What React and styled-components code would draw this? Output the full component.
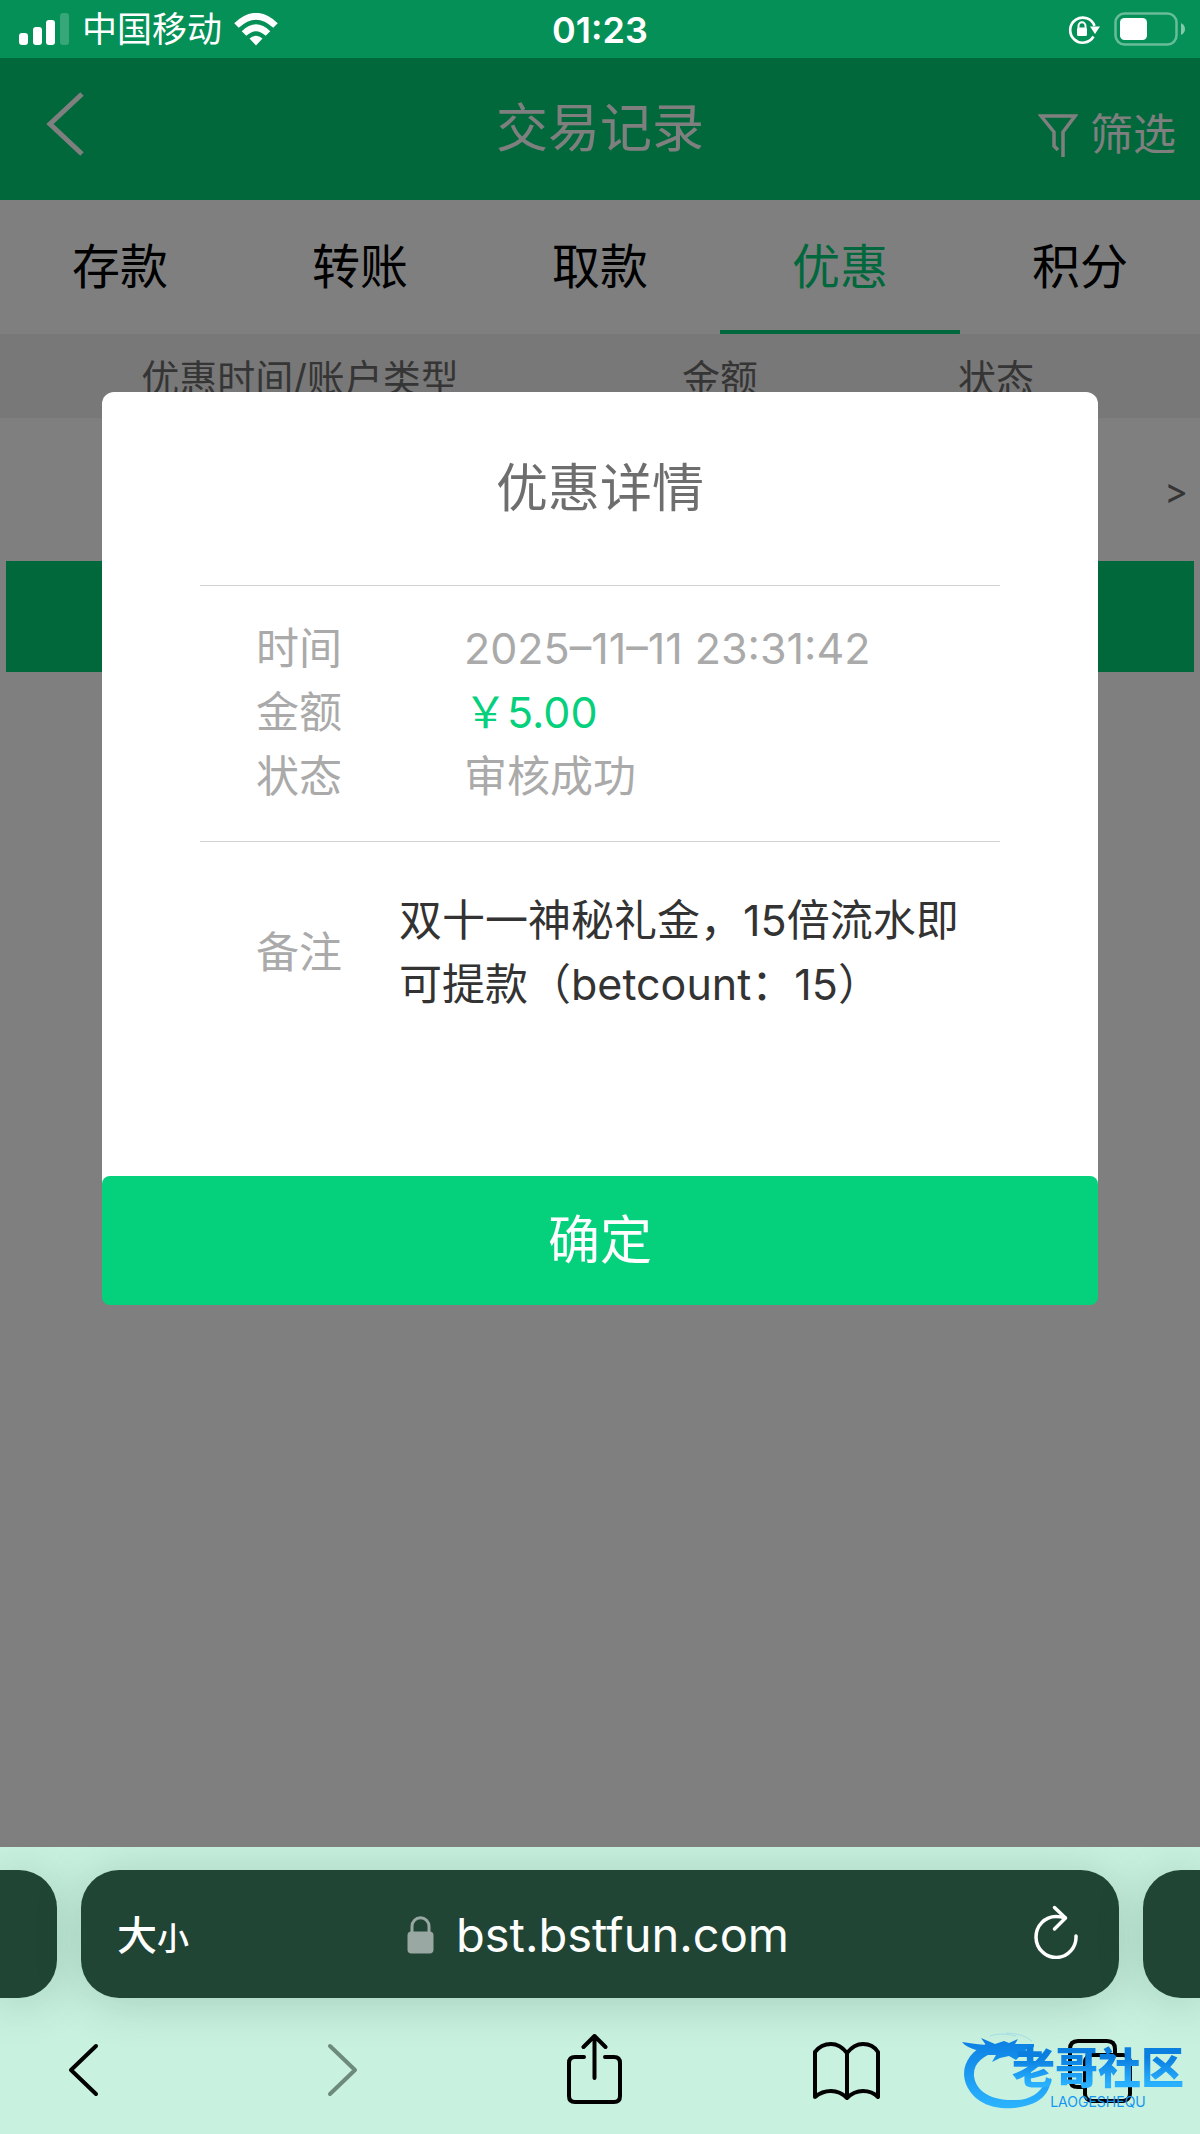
import React, { useState } from 'react';
import styled, { createGlobalStyle } from 'styled-components';

const GlobalStyle = createGlobalStyle`
    * {
        box-sizing: border-box;
    }
    body {
        margin: 0;
        font-family: Inter, 'Noto Sans CJK SC', sans-serif;
        color: #000;
    }
    button {
        border: 0;
        padding: 0;
        background: none;
        color: inherit;
        font: inherit;
        cursor: pointer;
    }
    svg {
        display: block;
        flex: none;
    }
`;

const Screen = styled.div`
    display: flex;
    flex-direction: column;
    min-height: 100vh;
`;

/* ---------- status bar ---------- */

const StatusBar = styled.div`
    display: grid;
    grid-template-columns: 1fr auto 1fr;
    align-items: center;
    height: 58px;
    padding: 0 14px;
    background: #059057;
    color: #fff;
`;

const StatusSide = styled.div`
    display: flex;
    align-items: center;
    justify-content: ${props => (props.$end ? 'flex-end' : 'flex-start')};
    gap: ${props => (props.$end ? '14px' : '12px')};
    padding-left: 5px;
    font-size: 35px;
    line-height: 56px;
`;

const Clock = styled.div`
    padding-top: 2px;
    font-size: 36px;
    font-weight: 600;
    line-height: 56px;
`;

/* ---------- page ---------- */

const Page = styled.main`
    position: relative;
    flex: 1;
    background: #fff;
`;

const Header = styled.header`
    display: grid;
    grid-template-columns: 1fr auto 1fr;
    align-items: center;
    height: 142px;
    padding: 0 24px;
    background: #00d076;
    color: #fff;
`;

const BackButton = styled.button`
    justify-self: start;
    padding: 0 22px 10px;
`;

const PageTitle = styled.h1`
    margin: 0;
    font-size: 52px;
    font-weight: 400;
    line-height: 64px;
`;

const FilterButton = styled.button`
    display: flex;
    align-items: center;
    justify-self: end;
    gap: 12px;
    padding-top: 10px;
    font-size: 43px;
    line-height: 64px;
`;

const Tabs = styled.nav`
    display: grid;
    grid-template-columns: repeat(5, 1fr);
    height: 134px;
`;

const Tab = styled.button`
    padding-top: 4px;
    border-bottom: 4px solid ${props => (props.$active ? '#00d078' : 'transparent')};
    color: ${props => (props.$active ? '#00d078' : '#000')};
    font-size: 48px;
    line-height: 64px;
`;

const Records = styled.table`
    width: 100%;
    table-layout: fixed;
    border-collapse: collapse;
    color: #6b6b6b;
    font-size: 38px;

    th {
        height: 84px;
        padding: 0 0 2px;
        background: #f0f0f0;
        font-weight: 400;
    }
    td {
        height: 143px;
        padding: 0 12px 0 0;
        text-align: right;
    }
`;

const RowLink = styled.button`
    font-size: 36px;
`;

const MoreButton = styled.button`
    display: block;
    width: calc(100% - 12px);
    height: 111px;
    margin: 0 6px;
    background: #00d076;
`;

/* ---------- dialog ---------- */

const Overlay = styled.div`
    position: absolute;
    inset: 0;
    display: flex;
    align-items: flex-start;
    justify-content: center;
    padding-top: 334px;
    background: rgba(0, 0, 0, 0.5);
`;

const Dialog = styled.section`
    width: 83%;
    border-radius: 12px;
    background: #fff;
`;

const DialogBody = styled.div`
    padding: 0 98px;
`;

const DialogTitle = styled.h2`
    margin: 0;
    padding: 65px 0 64px;
    color: #6e6e6e;
    font-size: 52px;
    font-weight: 400;
    line-height: 64px;
    text-align: center;
`;

const Details = styled.dl`
    display: grid;
    grid-template-columns: 208px 1fr;
    margin: 0;
    padding: 30px 56px 33px;
    border-top: 1px solid #d2d2d2;
    border-bottom: 1px solid #d2d2d2;
    color: #aaa;
    font-size: 43px;
    line-height: 64px;

    dd {
        margin: 0;
    }
`;

const Amount = styled.dd`
    color: #05d07c;
`;

const Remark = styled.dl`
    display: grid;
    grid-template-columns: 143px 1fr;
    align-items: center;
    margin: 0;
    padding: 46px 0 160px 56px;
    color: #aaa;
    font-size: 43px;
    line-height: 64px;

    dd {
        margin: 0;
        color: #333;
    }
`;

const ConfirmButton = styled.button`
    display: block;
    width: 100%;
    height: 129px;
    padding-bottom: 8px;
    border-radius: 8px;
    background: #05d07c;
    color: #fff;
    font-size: 52px;
`;

/* ---------- browser chrome ---------- */

const BrowserBar = styled.footer`
    position: relative;
    overflow: hidden;
    padding-top: 23px;
    background: #c9f1e0;
`;

const AddressRow = styled.div`
    display: flex;
    gap: 24px;
    height: 128px;
`;

const AddressBar = styled.div`
    display: grid;
    grid-template-columns: 1fr auto 1fr;
    align-items: center;
    flex: 1;
    padding: 0 40px 0 36px;
    border-radius: 38px;
    background: #204535;
    box-shadow: 0 4px 48px rgba(20, 70, 45, 0.2);
    color: #fff;
`;

const NeighbourTab = styled.div`
    width: 57px;
    border-radius: ${props => (props.$side === 'left' ? '0 38px 38px 0' : '38px 0 0 38px')};
    background: #204535;
    box-shadow: 0 4px 48px rgba(20, 70, 45, 0.2);
`;

const TextSize = styled.button`
    justify-self: start;
    padding-top: 6px;
    font-size: 40px;
    font-weight: 500;
    line-height: 56px;

    small {
        font-size: 32px;
    }
`;

const Address = styled.div`
    display: flex;
    align-items: center;
    gap: 22px;
    padding-top: 2px;
    font-size: 47px;
    line-height: 64px;
`;

const ReloadButton = styled.button`
    justify-self: end;
    padding-bottom: 4px;
`;

const Toolbar = styled.nav`
    display: flex;
    align-items: center;
    justify-content: space-between;
    height: 136px;
    padding: 8px 66px 0 49px;
`;

const Watermark = styled.div`
    position: absolute;
    right: 16px;
    bottom: 24px;
    color: #1496f0;
`;

const WatermarkText = styled.div`
    position: absolute;
    right: 0;
    bottom: 0;
    display: flex;
    flex-direction: column;
    align-items: center;
    font-size: 14px;
    line-height: 16px;

    strong {
        background: linear-gradient(#0a7fe0 30%, #29b0ff 80%);
        background-clip: text;
        color: transparent;
        font-size: 43px;
        font-weight: 900;
        line-height: 52px;
        white-space: nowrap;
    }
`;

/* ---------- icons ---------- */

function SignalIcon() {
    return (
        <svg width="51" height="32" viewBox="0 0 51 32" fill="#fff">
            <rect y="20" width="9" height="12" rx="3" />
            <rect x="14" y="14" width="9" height="18" rx="3" />
            <rect x="27" y="7" width="9" height="25" rx="3" />
            <rect x="41" width="9" height="32" rx="3" opacity="0.2" />
        </svg>
    );
}

function WifiIcon() {
    return (
        <svg width="44" height="33" viewBox="0 0 44 33" fill="none" stroke="#fff" strokeWidth="6.5">
            <path d="M2.500 12.500Q22-6 41.500 12.500" />
            <path d="M10 20.500Q22 9 34 20.500" />
            <path d="M22 32.500L15.500 25.500Q22 20 28.500 25.500Z" fill="#fff" stroke="none" />
        </svg>
    );
}

function RotationLockIcon() {
    return (
        <svg width="32" height="30" viewBox="0 0 32 30" fill="none" stroke="#fff" strokeWidth="2.6">
            <path d="M25.500 22.500A12.500 12.500 0 1 1 26.500 12" />
            <path d="M22 12.500H32L27 20Z" fill="#fff" stroke="none" />
            <path d="M10.500 14V12A3.500 3.800 0 0 1 17.500 12V14" strokeWidth="2" />
            <rect x="9" y="13.500" width="10" height="8.500" rx="1.500" fill="#fff" stroke="none" />
        </svg>
    );
}

function BatteryIcon() {
    return (
        <svg width="72" height="34" viewBox="0 0 72 34">
            <rect x="1.500" y="1.500" width="61" height="31" rx="9" fill="none" stroke="#fff" strokeWidth="2.500" opacity="0.4" />
            <rect x="6" y="6" width="27" height="22" rx="4.500" fill="#fff" />
            <path d="M67 11Q71 13 71 17T67 23Z" fill="#fff" opacity="0.5" />
        </svg>
    );
}

function HeaderBackIcon() {
    return (
        <svg width="38" height="64" viewBox="0 0 38 64" fill="none" stroke="currentColor" strokeWidth="5">
            <path d="M36 2L4 32L36 62" />
        </svg>
    );
}

function FunnelIcon() {
    return (
        <svg width="40" height="46" viewBox="0 0 40 46" fill="none" stroke="currentColor" strokeWidth="3.500">
            <path d="M20 39L16 35V21L3 5H37L25 21V46" />
        </svg>
    );
}

function LockIcon() {
    return (
        <svg width="27" height="38" viewBox="0 0 27 38" fill="none" stroke="#9aa8a4" strokeWidth="3">
            <path d="M5 17V10.500A8.500 8.800 0 0 1 22 10.500V17" />
            <rect x="0.500" y="15.500" width="26" height="22" rx="4" fill="#9aa8a4" stroke="none" />
        </svg>
    );
}

function ReloadIcon() {
    return (
        <svg width="46" height="54" viewBox="0 0 46 54" fill="none" stroke="#fff" strokeWidth="3.500" strokeLinecap="round" strokeLinejoin="round">
            <path d="M43 31A20 20.500 0 1 1 23 11.500Q28 11.500 32 13" />
            <path d="M21.500 2.500L32.500 13L21.500 24" />
        </svg>
    );
}

function ToolbarIcon({ children }) {
    return (
        <svg width="68" height="72" viewBox="0 0 68 72" fill="none" stroke="currentColor" strokeWidth="4" strokeLinecap="round" strokeLinejoin="round">
            {children}
        </svg>
    );
}

function DragonMark() {
    return (
        <svg width="222" height="84" viewBox="0 0 222 84">
            <defs>
                <linearGradient id="dragon" gradientUnits="userSpaceOnUse" x1="0" y1="14" x2="0" y2="82">
                    <stop offset="0" stopColor="#0b7fe3" />
                    <stop offset="1" stopColor="#2cb4ff" />
                </linearGradient>
            </defs>
            <g fill="url(#dragon)">
                <path d="M26 17C6 26-2 42 4 58C12 78 34 84 52 82C72 80 88 72 89 52L84 55C78 68 66 75 50 74C30 74 14 66 12 50C11 38 20 30 36 25Z" />
                <path d="M0 16L14 18L24 19L19 12L33 18L42 15L47 17L56 13L53 18L72 18L72 21L63 24L71 27L69 30L58 30L54 34L47 30L38 32L30 36L34 29L22 29L24 23L14 24C8 22 3 20 0 16Z" />
            </g>
            <path d="M28 10Q38 6 54 10M44 7Q60 7 70 15" fill="none" stroke="#a4dce6" strokeWidth="1" />
        </svg>
    );
}

const TABS = ['存款', '转账', '取款', '优惠', '积分'];

export default function App() {
    const [tab, setTab] = useState('优惠');
    const [open, setOpen] = useState(true);

    return (
        <Screen lang="zh-CN">
            <GlobalStyle />
            <StatusBar>
                <StatusSide>
                    <SignalIcon />
                    <span>中国移动</span>
                    <WifiIcon />
                </StatusSide>
                <Clock>01:23</Clock>
                <StatusSide $end>
                    <RotationLockIcon />
                    <BatteryIcon />
                </StatusSide>
            </StatusBar>

            <Page>
                <Header>
                    <BackButton aria-label="返回">
                        <HeaderBackIcon />
                    </BackButton>
                    <PageTitle>交易记录</PageTitle>
                    <FilterButton>
                        <FunnelIcon />
                        筛选
                    </FilterButton>
                </Header>
                <Tabs>
                    {TABS.map(name => (
                        <Tab key={name} $active={name === tab} onClick={() => setTab(name)}>
                            {name}
                        </Tab>
                    ))}
                </Tabs>
                <Records>
                    <colgroup>
                        <col width="50%" />
                        <col width="20%" />
                        <col width="26%" />
                        <col width="4%" />
                    </colgroup>
                    <thead>
                        <tr>
                            <th>优惠时间/账户类型</th>
                            <th>金额</th>
                            <th>状态</th>
                            <th />
                        </tr>
                    </thead>
                    <tbody>
                        <tr>
                            <td />
                            <td />
                            <td />
                            <td>
                                <RowLink onClick={() => setOpen(true)}>&gt;</RowLink>
                            </td>
                        </tr>
                    </tbody>
                </Records>
                <MoreButton aria-label="更多" />

                {open && (
                    <Overlay>
                        <Dialog role="dialog" aria-labelledby="dialog-title">
                            <DialogBody>
                                <DialogTitle id="dialog-title">优惠详情</DialogTitle>
                                <Details>
                                    <dt>时间</dt>
                                    <dd>2025–11–11 23:31:42</dd>
                                    <dt>金额</dt>
                                    <Amount>￥5.00</Amount>
                                    <dt>状态</dt>
                                    <dd>审核成功</dd>
                                </Details>
                                <Remark>
                                    <dt>备注</dt>
                                    <dd>双十一神秘礼金，15倍流水即可提款（betcount：15）</dd>
                                </Remark>
                            </DialogBody>
                            <ConfirmButton onClick={() => setOpen(false)}>确定</ConfirmButton>
                        </Dialog>
                    </Overlay>
                )}
            </Page>

            <BrowserBar>
                <AddressRow>
                    <NeighbourTab $side="left" />
                    <AddressBar>
                        <TextSize>
                            大<small>小</small>
                        </TextSize>
                        <Address>
                            <LockIcon />
                            bst.bstfun.com
                        </Address>
                        <ReloadButton aria-label="刷新">
                            <ReloadIcon />
                        </ReloadButton>
                    </AddressBar>
                    <NeighbourTab $side="right" />
                </AddressRow>
                <Toolbar>
                    <button aria-label="后退">
                        <ToolbarIcon>
                            <path d="M47 12L22 36L47 60" />
                        </ToolbarIcon>
                    </button>
                    <button aria-label="前进" disabled>
                        <ToolbarIcon>
                            <path d="M27 12L52 36L27 60" stroke="#6d8a7c" />
                        </ToolbarIcon>
                    </button>
                    <button aria-label="分享">
                        <ToolbarIcon>
                            <path d="M26 23H17Q11 23 11 29V62Q11 68 17 68H56Q62 68 62 62V29Q62 23 56 23H47" />
                            <path d="M36.500 44V3M25.500 13L36.500 2L47.500 13" />
                        </ToolbarIcon>
                    </button>
                    <button aria-label="书签">
                        <ToolbarIcon>
                            <path d="M35 19V64M35 19Q28 10 19 10Q9 10 3 18V63Q10 57 19 57Q28 57 35 64Q42 57 51 57Q60 57 66 63V18Q61 10 51 10Q42 10 35 19Z" />
                        </ToolbarIcon>
                    </button>
                    <button aria-label="标签页">
                        <ToolbarIcon>
                            <path d="M18 53H12Q4 53 4 45V15Q4 7 12 7H41Q49 7 49 15V20" />
                            <rect x="19" y="21" width="45" height="46" rx="7" />
                        </ToolbarIcon>
                    </button>
                </Toolbar>
                <Watermark>
                    <DragonMark />
                    <WatermarkText>
                        <strong>老哥社区</strong>
                        <span>LAOGESHEQU</span>
                    </WatermarkText>
                </Watermark>
            </BrowserBar>
        </Screen>
    );
}
